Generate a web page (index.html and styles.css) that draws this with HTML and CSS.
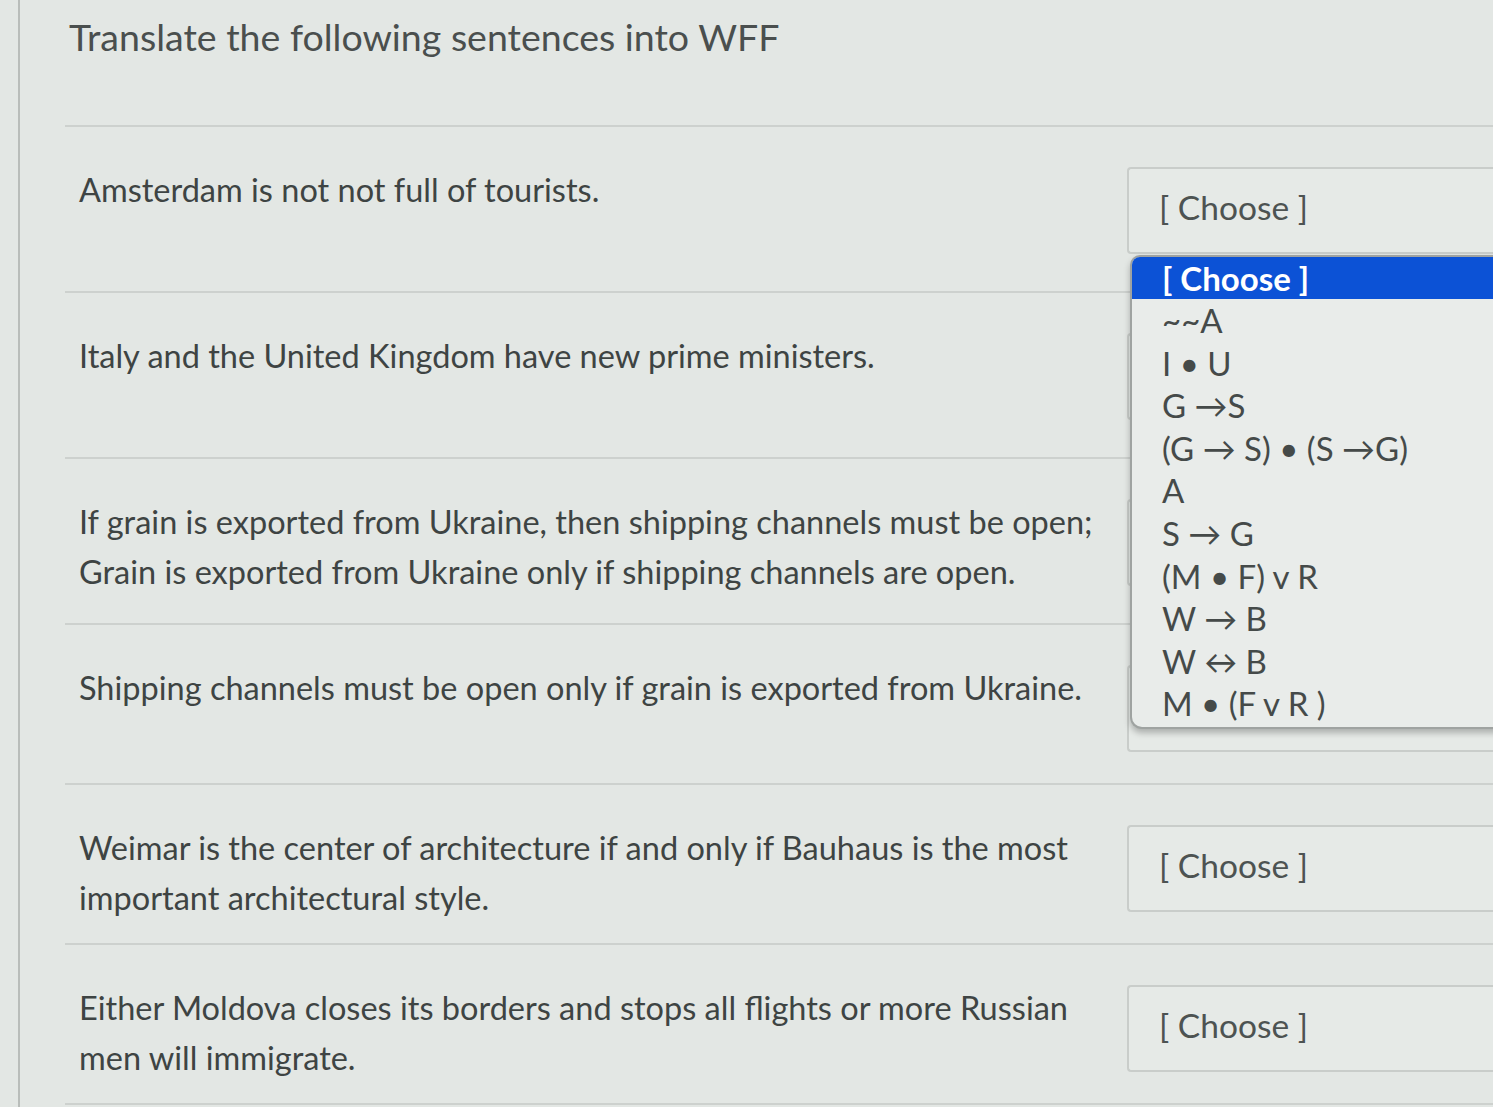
FILE: index.html
```html
<!DOCTYPE html>
<html>
<head>
<meta charset="utf-8">
<link rel="stylesheet" href="styles.css">
</head>
<body>
<div class="page">
  <h1 class="title">Translate the following sentences into WFF</h1>
  <div class="rows">
    <div class="row">
      <div class="q">Amsterdam is not not full of tourists.</div>
      <div class="sel">[ Choose ]</div>
    </div>
    <div class="row">
      <div class="q">Italy and the United Kingdom have new prime ministers.</div>
      <div class="sel covered"></div>
    </div>
    <div class="row">
      <div class="q">If grain is exported from Ukraine, then shipping channels must be open;<br>Grain is exported from Ukraine only if shipping channels are open.</div>
      <div class="sel covered"></div>
    </div>
    <div class="row short">
      <div class="q">Shipping channels must be open only if grain is exported from Ukraine.</div>
      <div class="sel covered"></div>
    </div>
    <div class="row short">
      <div class="q">Weimar is the center of architecture if and only if Bauhaus is the most<br>important architectural style.</div>
      <div class="sel">[ Choose ]</div>
    </div>
    <div class="row short">
      <div class="q">Either Moldova closes its borders and stops all flights or more Russian<br>men will immigrate.</div>
      <div class="sel">[ Choose ]</div>
    </div>
  </div>
  <ul class="dropdown">
    <li class="opt active">[ Choose ]</li>
    <li class="opt">~~A</li>
    <li class="opt">I • U</li>
    <li class="opt">G →S</li>
    <li class="opt">(G → S) • (S →G)</li>
    <li class="opt">A</li>
    <li class="opt">S → G</li>
    <li class="opt">(M • F) v R</li>
    <li class="opt">W → B</li>
    <li class="opt">W ↔ B</li>
    <li class="opt">M • (F v R )</li>
  </ul>
</div>
</body>
</html>
```

FILE: styles.css
```css
html, body {
  margin: 0;
  padding: 0;
  height: 100%;
  overflow: hidden;
}
body {
  background: #e3e7e4;
  font-family: Lato, "Open Sans", sans-serif;
  color: #3e4443;
}
.page {
  position: relative;
  margin-left: 18px;
  border-left: 2px solid #b9bdba;
  min-height: 1107px;
  padding-left: 45px;
}
.title {
  margin: 0;
  padding: 14px 0 0 4px;
  font-size: 37.5px;
  font-weight: 400;
  color: #4a4f4e;
  border-bottom: 2px solid #cdd1ce;
  box-sizing: border-box;
  height: 127px;
  line-height: 46px;
}
.rows {
  display: flex;
  flex-direction: column;
}
.row {
  display: grid;
  grid-template-columns: 1062px 420px;
  height: 166px;
  border-bottom: 2px solid #cdd1ce;
  box-sizing: border-box;
}
.row.short {
  height: 160px;
}
.q {
  padding: 38px 0 0 14px;
  font-size: 32.5px;
  line-height: 50px;
  color: #3e4443;
}
.sel {
  margin-top: 40px;
  height: 87px;
  box-sizing: border-box;
  border: 2px solid #c9cdca;
  border-right: none;
  border-radius: 4px 0 0 4px;
  background: #e6eae7;
  padding: 17px 0 0 30px;
  font-size: 33.5px;
  line-height: 42px;
  color: #4d5352;
}
.dropdown {
  position: absolute;
  left: 1110px;
  top: 255px;
  width: 420px;
  margin: 0;
  padding: 0 0 2px 0;
  list-style: none;
  background: #e9ecea;
  border: 2px solid #9fa3a1;
  border-right: none;
  border-radius: 10px 0 0 12px;
  box-shadow: 0 4px 6px rgba(0,0,0,0.25);
  overflow: hidden;
}
.opt {
  height: 42.6px;
  line-height: 42.6px;
  padding-left: 30px;
  font-size: 33px;
  color: #454a49;
}
.opt.active {
  background: #0c52d6;
  color: #ffffff;
  font-weight: 700;
  height: 42px;
  line-height: 42px;
}
```
